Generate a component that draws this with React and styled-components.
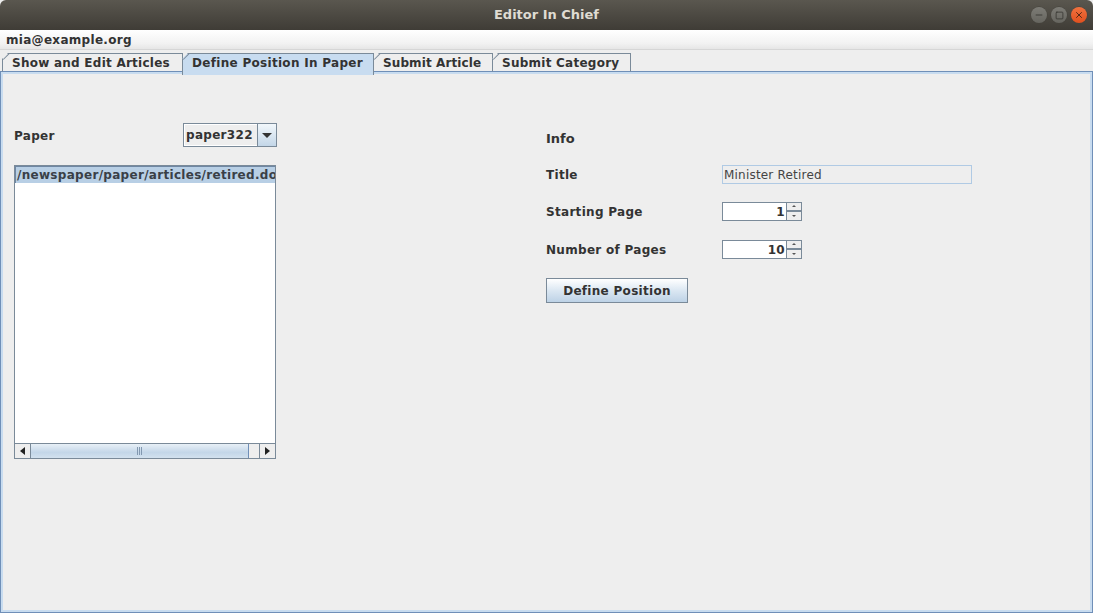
import React from "react";
import styled, { createGlobalStyle } from "styled-components";
import { Minus, Square, X } from "lucide-react";

const Global = createGlobalStyle`
  html, body {
    margin: 0;
    padding: 0;
    height: 100%;
    overflow: hidden;
    background: #eeeeee;
  }
  #root {
    height: 100%;
  }
`;

const Window = styled.div`
  display: flex;
  flex-direction: column;
  width: 1093px;
  height: 613px;
  font-family: "DejaVu Sans", sans-serif;
  font-size: 12px;
  letter-spacing: 0.3px;
  font-weight: bold;
  color: #333333;
  background: #eeeeee;
`;

const TitleBar = styled.div`
  position: relative;
  height: 30px;
  flex: none;
  border-radius: 6px 6px 0 0;
  background: linear-gradient(#5a574f, #3f3c36);
  color: #dfdbd2;
  font-size: 13px;
  letter-spacing: 0;
  line-height: 29px;
  text-align: center;
`;

const Controls = styled.div`
  position: absolute;
  top: 7px;
  right: 6px;
  display: flex;
  gap: 4px;
`;

const Control = styled.div`
  width: 16px;
  height: 16px;
  border-radius: 50%;
  display: flex;
  align-items: center;
  justify-content: center;
  color: ${(p) => (p.$close ? "#4a2413" : "#33322e")};
  background: ${(p) => (p.$close ? "linear-gradient(#f0723f, #e0501f)" : "linear-gradient(#7d7c76, #66655f)")};
  box-shadow: 0 0 0 0.5px #45433d;
`;

const MenuBar = styled.div`
  height: 20px;
  flex: none;
  padding-left: 6px;
  line-height: 20px;
  background: linear-gradient(#ffffff, #f2f2f2 70%, #e6e6e6);
  border-bottom: 1px solid #d6d6d6;
  box-sizing: border-box;
`;

const TabStrip = styled.div`
  display: flex;
  height: 21px;
  flex: none;
  padding: 3px 0 0 2px;
  box-sizing: border-box;
`;

const Tab = styled.div`
  position: relative;
  box-sizing: border-box;
  width: ${(p) => p.$w}px;
  height: ${(p) => (p.$active ? 22 : 19)}px;
  margin-right: -1px;
  padding-left: 9px;
  line-height: 18px;
  white-space: nowrap;
  letter-spacing: ${(p) => p.$spacing}px;
  border: 1px solid #7a8a99;
  border-bottom: ${(p) => (p.$active ? "none" : "1px solid #6f8fb8")};
  background: ${(p) => (p.$active ? "#c8dcf0" : "#eeeeee")};
  clip-path: polygon(6px 0, 100% 0, 100% 100%, 0 100%, 0 6px);
  z-index: ${(p) => (p.$active ? 2 : 1)};

  &::before {
    content: "";
    position: absolute;
    top: -1px;
    left: -1px;
    width: 8.5px;
    height: 1px;
    background: #7a8a99;
    transform: translateY(3px) rotate(-45deg);
  }
`;

const Content = styled.div`
  flex: 1;
  display: grid;
  grid-template-columns: 532px 1fr;
  box-sizing: border-box;
  border: 1px solid #6f8fb8;
  box-shadow: inset 0 0 0 2px #c8dcf0;
  padding: 51px 0 0 13px;
`;

const LeftColumn = styled.div`
  display: flex;
  flex-direction: column;
  gap: 18px;
`;

const PaperRow = styled.div`
  display: flex;
  align-items: center;
  justify-content: space-between;
  width: 263px;
  height: 24px;
`;

const Label = styled.span`
  padding-top: 2px;
`;

const Combo = styled.div`
  display: flex;
  width: 94px;
  height: 24px;
  box-sizing: border-box;
  border: 1px solid #7a8a99;
  background: #eeeeee;
  box-shadow: inset 0 0 0 1px #fff;
`;

const ComboValue = styled.div`
  flex: 1;
  padding-left: 2px;
  line-height: 22px;
  border-right: 1px solid #7a8a99;
`;

const ComboArrow = styled.div`
  width: 18px;
  display: flex;
  align-items: center;
  justify-content: center;
  background: linear-gradient(#f2f7fb, #c3d6e8);

  &::after {
    content: "";
    border: 5px solid transparent;
    border-top: 5px solid #333333;
    border-bottom: 0;
  }
`;

const ListBox = styled.div`
  width: 262px;
  height: 294px;
  box-sizing: border-box;
  border: 1px solid #7a8a99;
  background: #fff;
  display: flex;
  flex-direction: column;
`;

const ListBody = styled.div`
  flex: 1;
  overflow: hidden;
`;

const ListItem = styled.div`
  height: 17px;
  line-height: 16px;
  padding-left: 1px;
  white-space: nowrap;
  background: #b8cfe5;
  border: 1px solid #6f87a3;
  border-width: 1px 0 0 1px;
  box-sizing: border-box;
  color: #3a3f47;
`;

const ScrollBar = styled.div`
  display: flex;
  height: 15px;
  flex: none;
  box-sizing: border-box;
  border-top: 1px solid #7a8a99;
  background: #eeeeee;
`;

const ScrollButton = styled.div`
  width: 16px;
  flex: none;
  box-sizing: border-box;
  display: flex;
  align-items: center;
  justify-content: center;
  ${(p) => (p.$left ? "border-right: 1px solid #7a8a99;" : "border-left: 1px solid #7a8a99;")}

  &::after {
    content: "";
    border: 4px solid transparent;
    ${(p) => (p.$left ? "border-right: 5px solid #222; border-left: 0;" : "border-left: 5px solid #222; border-right: 0;")}
  }
`;

const ScrollThumb = styled.div`
  width: 218px;
  flex: none;
  box-sizing: border-box;
  border-right: 1px solid #6f8fb8;
  background: linear-gradient(#e8f0f7, #c3d6e8 60%, #d2e1ee);
  display: flex;
  align-items: center;
  justify-content: center;
  gap: 1px;
`;

const Grip = styled.span`
  width: 1px;
  height: 8px;
  background: #8298b0;
`;

const ScrollTrack = styled.div`
  flex: 1;
`;

const RightColumn = styled.div`
  display: flex;
  flex-direction: column;
`;

const Heading = styled.div`
  height: 33px;
  line-height: 32px;
  margin-bottom: 8px;
  font-size: 13px;
  letter-spacing: 0;
`;

const FormRow = styled.div`
  display: grid;
  grid-template-columns: 176px auto;
  justify-content: start;
  align-items: center;
  height: 20px;
  margin-bottom: ${(p) => p.$gap}px;
`;

const ReadOnlyField = styled.div`
  width: 250px;
  height: 19px;
  box-sizing: border-box;
  padding-left: 1px;
  line-height: 18px;
  font-weight: normal;
  letter-spacing: 0.2px;
  color: #444444;
  border: 1px solid #b0cae4;
`;

const Spinner = styled.div`
  display: flex;
  width: 80px;
  height: 19px;
`;

const SpinnerValue = styled.div`
  flex: 1;
  box-sizing: border-box;
  text-align: right;
  padding-right: 1px;
  line-height: 18px;
  background: #fff;
  border: 1px solid #7a8a99;
  border-right: none;
`;

const SpinnerButtons = styled.div`
  width: 16px;
  display: flex;
  flex-direction: column;
  box-sizing: border-box;
  border: 1px solid #7a8a99;
`;

const SpinnerButton = styled.div`
  flex: 1;
  display: flex;
  align-items: center;
  justify-content: center;
  background: #eeeeee;
  ${(p) => p.$up && "border-bottom: 2px solid #7a8a99;"}

  &::after {
    content: "";
    border: 2px solid transparent;
    ${(p) => (p.$up ? "border-bottom: 2px solid #555; border-top: 0;" : "border-top: 2px solid #555; border-bottom: 0;")}
  }
`;

const DefineButton = styled.div`
  width: 142px;
  height: 25px;
  margin-top: 19px;
  box-sizing: border-box;
  border: 1px solid #7a8a99;
  background: linear-gradient(#ffffff, #dbe7f2 50%, #bdd2e6);
  text-align: center;
  line-height: 24px;
`;

const SpinnerField = ({ value }) => (
  <Spinner>
    <SpinnerValue>{value}</SpinnerValue>
    <SpinnerButtons>
      <SpinnerButton $up />
      <SpinnerButton />
    </SpinnerButtons>
  </Spinner>
);

const tabs = [
  { label: "Show and Edit Articles", w: 181, spacing: 0.25 },
  { label: "Define Position In Paper", w: 192, spacing: 0.3, active: true },
  { label: "Submit Article", w: 120, spacing: 0.1 },
  { label: "Submit Category", w: 139, spacing: 0.25 },
];

export default function App() {
  return (
    <Window>
      <Global />
      <TitleBar>
        Editor In Chief
        <Controls>
          <Control>
            <Minus size={10} strokeWidth={2} />
          </Control>
          <Control>
            <Square size={9} strokeWidth={2} />
          </Control>
          <Control $close>
            <X size={10} strokeWidth={2.2} />
          </Control>
        </Controls>
      </TitleBar>
      <MenuBar>mia@example.org</MenuBar>
      <TabStrip>
        {tabs.map((t) => (
          <Tab key={t.label} $w={t.w} $active={t.active} $spacing={t.spacing}>
            {t.label}
          </Tab>
        ))}
      </TabStrip>
      <Content>
        <LeftColumn>
          <PaperRow>
            <Label>Paper</Label>
            <Combo>
              <ComboValue>paper322</ComboValue>
              <ComboArrow />
            </Combo>
          </PaperRow>
          <ListBox>
            <ListBody>
              <ListItem>/newspaper/paper/articles/retired.doc</ListItem>
            </ListBody>
            <ScrollBar>
              <ScrollButton $left />
              <ScrollThumb>
                <Grip />
                <Grip />
                <Grip />
              </ScrollThumb>
              <ScrollTrack />
              <ScrollButton />
            </ScrollBar>
          </ListBox>
        </LeftColumn>
        <RightColumn>
          <Heading>Info</Heading>
          <FormRow $gap={17}>
            <Label>Title</Label>
            <ReadOnlyField>Minister Retired</ReadOnlyField>
          </FormRow>
          <FormRow $gap={18}>
            <Label>Starting Page</Label>
            <SpinnerField value="1" />
          </FormRow>
          <FormRow $gap={0}>
            <Label>Number of Pages</Label>
            <SpinnerField value="10" />
          </FormRow>
          <DefineButton>Define Position</DefineButton>
        </RightColumn>
      </Content>
    </Window>
  );
}
